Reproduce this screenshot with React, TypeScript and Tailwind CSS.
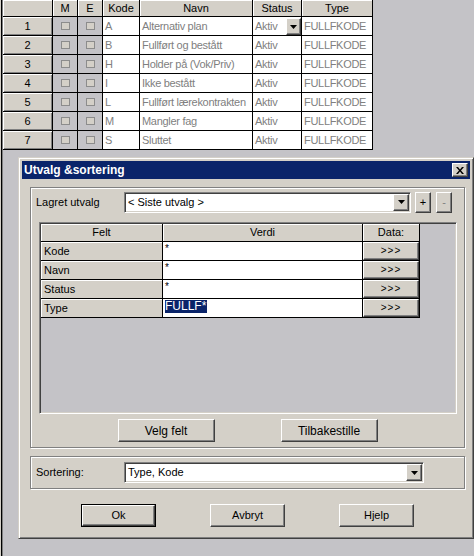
import React from "react";

const rows = [
  ["1", "A", "Alternativ plan"],
  ["2", "B", "Fullført og bestått"],
  ["3", "H", "Holder på (Vok/Priv)"],
  ["4", "I", "Ikke bestått"],
  ["5", "L", "Fullført lærekontrakten"],
  ["6", "M", "Mangler fag"],
  ["7", "S", "Sluttet"],
];

const fields = ["Kode", "Navn", "Status", "Type"];

// classic win2k bevels
const raised =
  "border border-t-white border-l-white border-r-[#404040] border-b-[#404040] shadow-[inset_-1px_-1px_0_#808080] bg-[#d4d0c8]";
const sunken =
  "border border-t-[#808080] border-l-[#808080] border-r-white border-b-white shadow-[inset_1px_1px_0_#404040,inset_-1px_-1px_0_#d4d0c8]";
const etched = "border border-[#808080] shadow-[inset_1px_1px_0_#fff,1px_1px_0_#fff]";

const headCell = "flex items-center justify-center bg-[#d4d0c8] shadow-[inset_1px_1px_0_#fff] text-black";
const rowHead =
  "flex items-center justify-center bg-[#d4d0c8] shadow-[inset_1px_1px_0_#fff,inset_-1px_-1px_0_#808080] text-black";
const dataCell =
  "flex items-center overflow-hidden whitespace-nowrap bg-white pl-[2px] text-[#808080] tracking-[-0.3px]";

function Arrow() {
  return (
    <svg width="7" height="4" viewBox="0 0 7 4">
      <polygon points="0,0 7,0 3.5,4" fill="#000" />
    </svg>
  );
}

function DropButton({ className = "" }: { className?: string }) {
  return (
    <div className={`flex items-center justify-center ${raised} ${className}`}>
      <Arrow />
    </div>
  );
}

function Check() {
  return <div className="h-[8px] w-[9px] border border-[#8c8c8c] bg-[#d4d0c8]" />;
}

function Combo({ text, width }: { text: string; width: string }) {
  return (
    <div className={`flex h-[21px] items-center bg-white p-px ${sunken} ${width}`}>
      <span className="flex-1 pl-[2px] text-black">{text}</span>
      <DropButton className="h-[17px] w-[16px]" />
    </div>
  );
}

function Btn({ label, def = false }: { label: string; def?: boolean }) {
  const inner = (
    <div className={`flex h-full w-full items-center justify-center ${raised} text-black`}>{label}</div>
  );
  if (def) return <div className="h-[23px] w-[75px] border border-black">{inner}</div>;
  return <div className="h-[23px] w-[75px]">{inner}</div>;
}

export default function App() {
  return (
    <div className="flex h-[556px] w-[474px] overflow-hidden bg-[#c4c3c7] font-['Liberation_Sans',Arial,sans-serif] text-[11px] leading-none">
      {/* window frame edge */}
      <div className="w-[3px] shrink-0 border-l border-r border-l-[#d4d0c8] border-r-[#808080] bg-black" />

      <div className="flex flex-1 flex-col">
        {/* background grid */}
        <div className="grid w-[370px] grid-cols-[49px_24px_24px_36px_112px_48px_70px] grid-rows-[16px_repeat(7,18px)] gap-px bg-black pb-px pr-px">
          <div className={headCell} />
          <div className={headCell}>M</div>
          <div className={headCell}>E</div>
          <div className={headCell}>Kode</div>
          <div className={headCell}>Navn</div>
          <div className={headCell}>Status</div>
          <div className={headCell}>Type</div>
          {rows.map(([n, k, navn]) => (
            <React.Fragment key={n}>
              <div className={rowHead}>{n}</div>
              <div className="flex items-center justify-center bg-[#c4c3c7]">
                <Check />
              </div>
              <div className="flex items-center justify-center bg-[#c4c3c7]">
                <Check />
              </div>
              <div className={dataCell}>{k}</div>
              <div className={dataCell}>{navn}</div>
              <div className={dataCell}>
                <span className="flex-1">Aktiv</span>
                {n === "1" && <DropButton className="mt-px h-[17px] w-[15px]" />}
              </div>
              <div className={dataCell}>FULLFKODE</div>
            </React.Fragment>
          ))}
        </div>

        {/* dialog */}
        <div className="ml-[15px] mt-[7px] flex h-[382px] w-[456px] flex-col border border-[#d4d0c8] border-b-[#404040] border-r-[#404040] bg-[#d4d0c8] p-[3px] shadow-[inset_1px_1px_0_#fff,inset_-1px_-1px_0_#808080]">
          <div className="flex h-[18px] items-center justify-between bg-[#0a246a] pl-[2px] pr-[2px]">
            <span className="text-[12px] font-bold text-white">Utvalg &amp;sortering</span>
            <div className={`flex h-[14px] w-[16px] items-center justify-center ${raised}`}>
              <svg width="8" height="7" viewBox="0 0 8 7">
                <path d="M0 0h2l2 2.5L6 0h2L5 3.5 8 7H6L4 4.5 2 7H0l3-3.5z" fill="#000" />
              </svg>
            </div>
          </div>

          <div className="flex flex-1 flex-col pl-[8px]">
            {/* selection group */}
            <div className={`mt-[8px] flex h-[261px] w-[435px] flex-col ${etched}`}>
              <div className="mt-[3px] flex h-[22px] items-center pl-[5px]">
                <span className="w-[88px] text-black">Lagret utvalg</span>
                <Combo text="< Siste utvalg >" width="w-[287px]" />
                <div className={`ml-[4px] flex h-[21px] w-[16px] items-center justify-center ${raised} text-black`}>+</div>
                <div className={`ml-[5px] flex h-[21px] w-[16px] items-center justify-center ${raised} text-[#808080]`}>-</div>
              </div>

              <div className={`ml-[8px] mt-[9px] h-[192px] w-[418px] bg-[#c4c3c7] p-px ${sunken}`}>
                <div className="grid w-[379px] grid-cols-[121px_199px_56px] grid-rows-[17px_repeat(4,18px)] gap-px bg-black pb-px pr-px">
                  <div className={headCell}>Felt</div>
                  <div className={headCell}>Verdi</div>
                  <div className={headCell}>Data:</div>
                  {fields.map((f) => (
                    <React.Fragment key={f}>
                      <div className="flex items-center bg-[#d4d0c8] pl-[3px] text-black shadow-[inset_1px_1px_0_#fff]">
                        {f}
                      </div>
                      <div className="flex items-start bg-white pl-[2px] pt-[2px] text-[10px] text-black">
                        {f === "Type" ? (
                          <span className="mt-[-1px] bg-[#0a246a] pr-px text-[12px] leading-[13px] text-white">FULLF*</span>
                        ) : (
                          "*"
                        )}
                      </div>
                      <div className={`flex items-center justify-center text-[10px] tracking-[1px] ${raised} text-black`}>
                        &gt;&gt;&gt;
                      </div>
                    </React.Fragment>
                  ))}
                </div>
              </div>

              <div className="mt-[5px] flex justify-center gap-[66px]">
                <div className="h-[23px] w-[97px]">
                  <div className={`flex h-full w-full items-center justify-center ${raised} text-[12px] text-black`}>Velg felt</div>
                </div>
                <div className="h-[23px] w-[97px]">
                  <div className={`flex h-full w-full items-center justify-center ${raised} text-[12px] text-black`}>Tilbakestille</div>
                </div>
              </div>
            </div>

            {/* sorting group */}
            <div className={`mt-[8px] flex h-[33px] w-[435px] items-center pl-[5px] ${etched}`}>
              <span className="w-[88px] text-black">Sortering:</span>
              <Combo text="Type, Kode" width="w-[300px]" />
            </div>

            <div className="mt-[15px] flex gap-[54px] pl-[51px]">
              <Btn label="Ok" def />
              <Btn label="Avbryt" />
              <Btn label="Hjelp" />
            </div>
          </div>
        </div>
      </div>
    </div>
  );
}
